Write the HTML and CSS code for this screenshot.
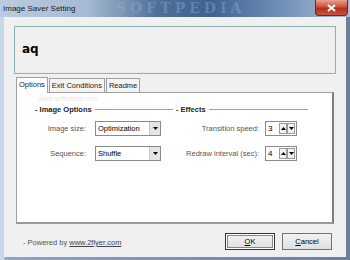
FILE: index.html
```html
<!DOCTYPE html>
<html>
<head>
<meta charset="utf-8">
<link rel="stylesheet" href="styles.css">
</head>
<body>
<div class="window">
  <div class="titlebar">
    <span class="title">Image Saver Setting</span>
    <span class="wm">SOFTPEDIA</span>
    <span class="close"><svg width="9" height="8" viewBox="0 0 9 8"><path d="M1 1L8 7M8 1L1 7" stroke="#fff" stroke-width="2"/></svg></span>
  </div>
  <div class="client">
    <div class="preview"><span class="aq">aq</span></div>
    <div class="tabs">
      <div class="tab active">Options</div>
      <div class="tab">Exit Conditions</div>
      <div class="tab">Readme</div>
    </div>
    <div class="panel">
      <div class="pwm">www.softpedia.com</div>
      <div class="groups">
        <div class="group left">
          <div class="ghead"><span>- Image Options</span><i></i></div>
          <div class="rows">
            <label>Image size:</label>
            <div class="combo"><span>Optimization</span><b><svg width="5" height="3" viewBox="0 0 5 3"><path d="M0 0H5L2.5 3Z" fill="#000"/></svg></b></div>
            <label>Sequence:</label>
            <div class="combo"><span>Shuffle</span><b><svg width="5" height="3" viewBox="0 0 5 3"><path d="M0 0H5L2.5 3Z" fill="#000"/></svg></b></div>
          </div>
        </div>
        <div class="group right">
          <div class="ghead"><span>- Effects</span><i></i></div>
          <div class="rows">
            <label>Transition speed:</label>
            <div class="spin"><span>3</span><em><svg width="5" height="3" viewBox="0 0 5 3"><path d="M0 3H5L2.5 0Z" fill="#000"/></svg></em><em><svg width="5" height="3" viewBox="0 0 5 3"><path d="M0 0H5L2.5 3Z" fill="#000"/></svg></em></div>
            <label>Redraw interval (sec):</label>
            <div class="spin"><span>4</span><em><svg width="5" height="3" viewBox="0 0 5 3"><path d="M0 3H5L2.5 0Z" fill="#000"/></svg></em><em><svg width="5" height="3" viewBox="0 0 5 3"><path d="M0 0H5L2.5 3Z" fill="#000"/></svg></em></div>
          </div>
        </div>
      </div>
    </div>
    <div class="footer">
      <span class="powered">- Powered by <u>www.2flyer.com</u></span>
      <div class="buttons">
        <div class="btn def"><span><u>O</u>K</span></div>
        <div class="btn"><span><u>C</u>ancel</span></div>
      </div>
    </div>
  </div>
</div>
</body>
</html>
```
FILE: styles.css
```css
html, body {
  margin: 0;
  padding: 0;
  width: 350px;
  height: 260px;
  overflow: hidden;
  background: #5a6f8c;
}
.window {
  width: 350px;
  height: 260px;
  display: flex;
  flex-direction: column;
  background: linear-gradient(90deg, #c9d9ec 0, #c9d9ec 4px, #8fa5c0 5px, #6b7f99 100%);
  font-family: "Liberation Sans", Arial, sans-serif;
  font-size: 7.5px;
  color: #000;
}
.titlebar {
  height: 17px;
  flex: none;
  display: flex;
  align-items: center;
  position: relative;
  overflow: hidden;
  background: linear-gradient(90deg, #b9cbe0 0, #a5bad3 25%, #4f6f97 45%, #3e628f 60%, #6f8fb6 80%, #aabfd8 100%);
}
.title {
  padding-left: 3px;
  font-size: 8px;
  color: #1a1a1a;
  position: relative;
  z-index: 1;
}
.wm {
  position: absolute;
  left: 116px;
  top: 1px;
  line-height: 15px;
  font-family: "DejaVu Serif", serif;
  font-weight: bold;
  font-size: 14px;
  letter-spacing: 4px;
  color: rgba(150, 180, 215, 0.4);
}
.close {
  position: absolute;
  right: 2px;
  top: 0;
  width: 33px;
  height: 16px;
  border-radius: 0 0 4px 4px;
  background: linear-gradient(180deg, #e8a08f 0, #d0523a 45%, #b3301a 55%, #c9533c 100%);
  border: 1px solid #6a2a20;
  border-top: none;
  box-sizing: border-box;
  display: flex;
  align-items: center;
  justify-content: center;
}
.client {
  flex: 1;
  margin: 0 4px 3px 4px;
  background: #f0f0f0;
  display: flex;
  flex-direction: column;
  box-sizing: border-box;
  padding: 9px 0 0 10px;
}
.preview {
  width: 322px;
  height: 48px;
  box-sizing: border-box;
  border: 1px solid #8db5b2;
  box-shadow: inset 0 0 0 1px #e4eeee;
  display: flex;
  align-items: center;
  padding-left: 7px;
  flex: none;
}
.aq {
  font-family: "DejaVu Sans", sans-serif;
  font-weight: bold;
  font-size: 12px;
  margin-top: -3px;
}
.tabs {
  display: flex;
  margin: 3px 0 0 2px;
  height: 15px;
  align-items: flex-end;
  flex: none;
}
.tab {
  height: 13px;
  line-height: 13px;
  padding: 0 2px;
  border: 1px solid #a0a0a0;
  border-bottom: none;
  background: #f4f4f4;
  margin-right: 1px;
  white-space: nowrap;
  color: #222;
}
.tab.active {
  height: 15px;
  line-height: 14px;
  background: #fff;
  margin-bottom: -1px;
  position: relative;
  z-index: 1;
}
.panel {
  width: 318px;
  height: 132px;
  margin-left: 2px;
  box-sizing: border-box;
  background: #fff;
  border: 1px solid #a0a0a0;
  border-right: 2px solid #808080;
  border-bottom: 2px solid #9a9a9a;
  flex: none;
  padding: 2px 0 0 18px;
}
.pwm {
  height: 10px;
  font-size: 7px;
  color: #e8e8e8;
  padding-left: 3px;
}
.groups {
  display: flex;
}
.group.left { width: 141px; }
.group.right { width: 135px; }
.ghead {
  display: flex;
  align-items: center;
  height: 9px;
  font-weight: bold;
  color: #222;
  white-space: nowrap;
}
.ghead i {
  flex: 1;
  height: 0;
  border-top: 1px solid #a0a0a0;
  margin-left: 3px;
  margin-right: 3px;
}
.rows {
  display: grid;
  row-gap: 10px;
  column-gap: 9px;
  margin-top: 7px;
  align-items: center;
}
.left .rows { grid-template-columns: 51px 66px; }
.right .rows { grid-template-columns: 83px 32px; column-gap: 6px; }
.rows label {
  text-align: right;
  color: #555;
  white-space: nowrap;
}
.combo {
  height: 15px;
  box-sizing: border-box;
  border: 1px solid #8a8a8a;
  display: flex;
  align-items: center;
  background: #fff;
}
.combo span { flex: 1; padding-left: 2px; white-space: nowrap; }
.combo b {
  width: 10px;
  height: 13px;
  background: #e4e4e4;
  border-left: 1px solid #c8c8c8;
  display: flex;
  align-items: center;
  justify-content: center;
}
.spin {
  height: 15px;
  box-sizing: border-box;
  border: 1px solid #8a8a8a;
  display: flex;
  align-items: center;
  background: #fff;
  padding-right: 1px;
  font-size: 8px;
}
.spin span { flex: 1; padding-left: 2px; }
.spin em {
  width: 6px;
  height: 9px;
  border: 1px solid #9a9a9a;
  background: #f2f2f2;
  display: flex;
  align-items: center;
  justify-content: center;
}
.footer {
  flex: 1;
  display: flex;
  align-items: center;
  justify-content: space-between;
  padding-right: 14px;
}
.powered {
  color: #555;
  padding-left: 9px;
  margin-top: 4px;
}
.powered u { color: #444; }
.buttons {
  display: flex;
  gap: 7px;
  margin-top: 2px;
}
.btn {
  width: 50px;
  height: 17px;
  box-sizing: border-box;
  border: 1px solid #707070;
  background: linear-gradient(#f2f2f2, #e0e0e0);
  display: flex;
  align-items: center;
  justify-content: center;
}
.btn.def {
  border: 1px solid #333;
  box-shadow: inset 0 0 0 1px #fff, inset 0 0 0 2px #888;
}
```
